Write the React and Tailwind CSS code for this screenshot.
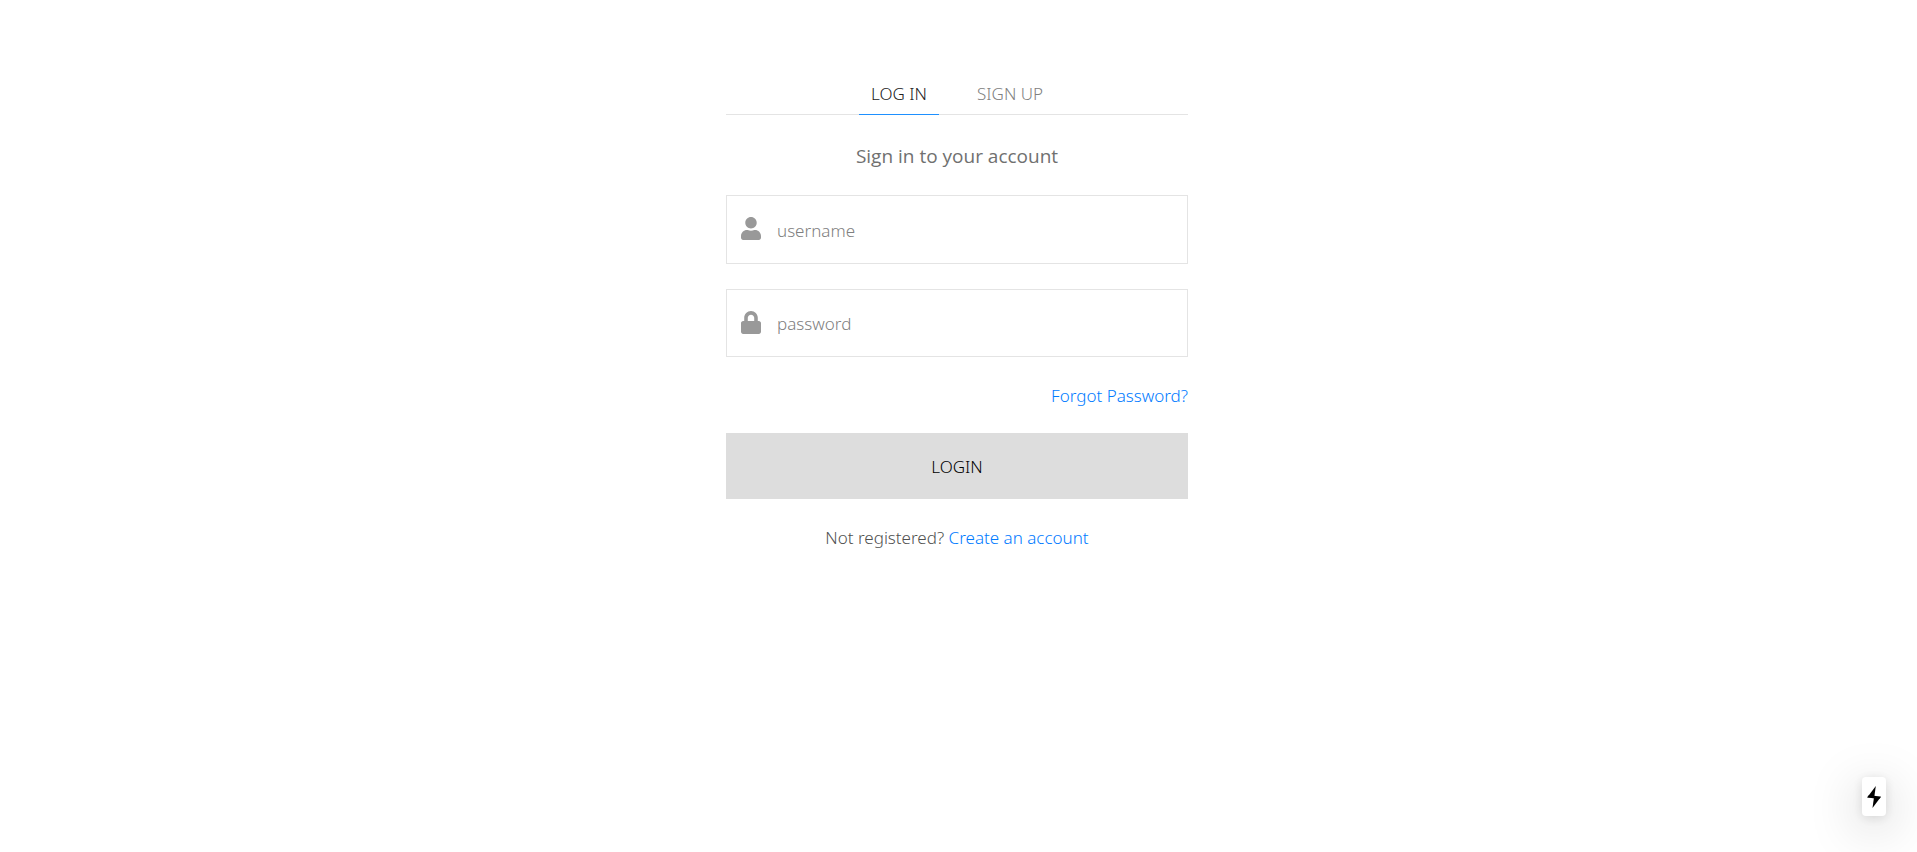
import { FaLock, FaUser } from 'react-icons/fa';

function Field({ id, type, placeholder, icon: Icon, height }) {
  return (
    <label
      htmlFor={id}
      className={`flex ${height} w-full items-center border border-[#e4e4e4] pl-3.5 focus-within:border-[#1e90ff]`}
    >
      <Icon className="mb-0.5 h-[23px] w-5 shrink-0 text-[#999999]" aria-hidden="true" />
      <input
        id={id}
        name={id}
        type={type}
        aria-label={placeholder}
        placeholder={placeholder}
        className="min-w-0 flex-1 bg-transparent pt-0.5 pl-4 text-[17px] leading-6 text-[#333333] outline-none placeholder:text-[#808080]"
      />
    </label>
  );
}

function BuildIndicator() {
  return (
    <div className="fixed right-[31px] bottom-9 flex h-[39px] w-6 items-center justify-center rounded bg-white shadow-[0_11px_50px_0_rgba(0,0,0,0.25),0_2px_12px_0_rgba(0,0,0,0.12)]">
      <svg viewBox="0 0 60 80" className="h-6 w-[18px]" aria-hidden="true">
        <path d="M36 3L30.74 41H8L36 3Z" fill="black" />
        <path d="M25 77L30.26 39H53L25 77Z" fill="black" />
        <path d="M13.5 33.5L53 39L47.5 46.5L7 41.25L13.5 33.5Z" fill="black" />
      </svg>
    </div>
  );
}

export default function App() {
  return (
    <main className="min-h-screen bg-white pt-[73px] pr-[3px] font-['Noto_Sans',sans-serif] text-[17px] leading-6 font-light text-[#505050]">
      <div className="mx-auto w-full max-w-[462px]">
        <nav className="flex justify-center gap-[26px] border-b border-[#e4e4e4]">
          <button type="button" className="-mb-px h-[42px] w-20 border-b border-[#1e90ff] pt-px text-[#222222]">
            LOG IN
          </button>
          <button type="button" className="-mb-px h-[42px] w-[90px] border-b border-transparent pt-px text-[#808080]">
            SIGN UP
          </button>
        </nav>
        <form onSubmit={(e) => e.preventDefault()}>
          <h1 className="mt-[27px] text-center font-['Open_Sans',sans-serif] text-[19px] leading-7 font-normal text-[#707070]">
            Sign in to your account
          </h1>
          <div className="mt-[25px] flex flex-col gap-[25px]">
            <Field id="username" type="text" placeholder="username" icon={FaUser} height="h-[69px]" />
            <Field id="password" type="password" placeholder="password" icon={FaLock} height="h-[68px]" />
          </div>
          <div className="mt-[27px] text-right">
            <a href="#forgot" className="text-[#007bff]">Forgot Password?</a>
          </div>
          <button type="submit" className="mt-[25px] h-[66px] w-full bg-[#dddddd] pt-0.5 text-black">
            LOGIN
          </button>
          <p className="mt-[27px] text-center">
            Not registered?{' '}
            <a href="#signup" className="text-[#007bff]">Create an account</a>
          </p>
        </form>
      </div>
      <BuildIndicator />
    </main>
  );
}
